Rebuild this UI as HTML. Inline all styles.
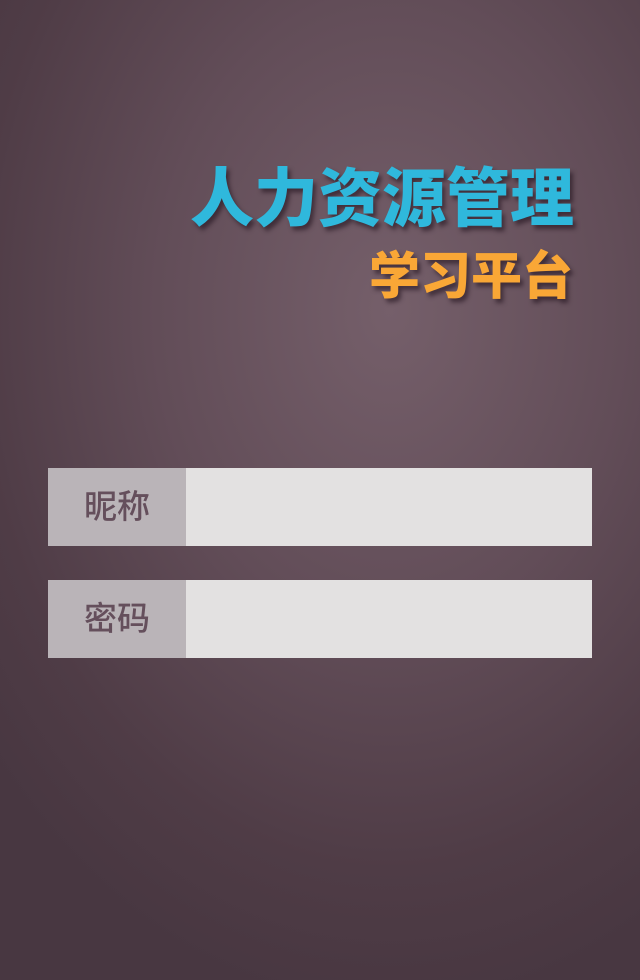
<!DOCTYPE html>
<html><head><meta charset="utf-8"><style>
html,body{margin:0;padding:0;}
body{width:640px;height:980px;overflow:hidden;position:relative;
background:radial-gradient(ellipse 520px 700px at 390px 310px,#755f6a 0%,#624d58 45%,#4f3c46 80%,#483741 100%);
font-family:"Liberation Sans","Noto Sans CJK SC",sans-serif;}
.t1{position:absolute;right:66px;top:159px;font-size:64px;line-height:80px;font-weight:900;color:#2fb8dc;
text-shadow:3px 4px 4px rgba(30,15,25,.55);white-space:nowrap;}
.t2{position:absolute;right:67px;top:244px;font-size:51px;line-height:66px;font-weight:900;color:#f9a736;
text-shadow:3px 4px 4px rgba(30,15,25,.55);white-space:nowrap;}
.row{position:absolute;left:48px;width:544px;height:78px;background:#e3e1e1;}
.lab{position:absolute;left:0;top:0;width:138px;height:78px;background:#bab4b8;color:#654f5c;font-size:33px;line-height:78px;text-align:center;font-weight:500;}
</style></head><body>
<div class="t1">人力资源管理</div>
<div class="t2">学习平台</div>
<div class="row" style="top:468px"><div class="lab">昵称</div></div>
<div class="row" style="top:580px"><div class="lab">密码</div></div>
</body></html>
